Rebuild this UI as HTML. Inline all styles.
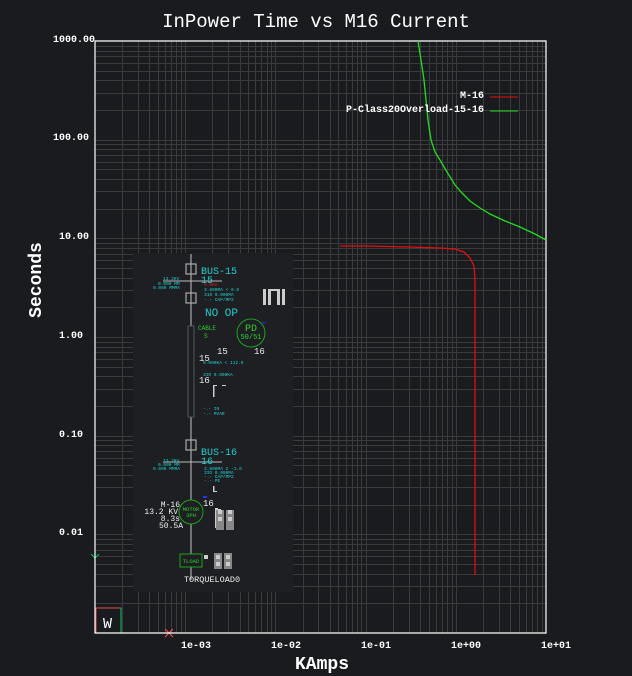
<!DOCTYPE html>
<html><head><meta charset="utf-8"><style>
html,body{margin:0;padding:0;background:#1a1b1e;width:632px;height:676px;overflow:hidden}
svg{display:block}
text{font-family:"Liberation Mono","DejaVu Sans Mono",monospace}
</style></head><body>
<svg id="s" width="632" height="676" xmlns="http://www.w3.org/2000/svg">
<rect width="632" height="676" fill="#1a1b1e"/>
<g id="grid" stroke="#3b3b3b" stroke-width="1"></g>
<text x="316" y="27" fill="#fff" font-size="19" text-anchor="middle">InPower Time vs M16 Current</text>
<g fill="#fff" font-size="10" font-weight="bold" text-anchor="end">
<text x="95" y="42">1000.00</text><text x="89" y="140">100.00</text><text x="89" y="239">10.00</text>
<text x="83" y="338">1.00</text><text x="83" y="437">0.10</text><text x="83" y="535">0.01</text>
</g>
<g fill="#fff" font-size="10" font-weight="bold">
<text x="181" y="648">1e-03</text><text x="271" y="648">1e-02</text><text x="361" y="648">1e-01</text>
<text x="451" y="648">1e+00</text><text x="541" y="648">1e+01</text>
</g>
<text x="322" y="669" fill="#fff" font-size="18" font-weight="bold" text-anchor="middle">KAmps</text>
<text transform="translate(41,280) rotate(-90)" fill="#fff" font-size="18" font-weight="bold" text-anchor="middle">Seconds</text>
<!-- overlay diagram -->
<rect x="133" y="253" width="160" height="339" fill="#1d1f22"/>
<rect x="96" y="608" width="25" height="25" fill="#1a1b1e" stroke="#e05050" stroke-width="1"/>
<line x1="121" y1="608" x2="121" y2="633" stroke="#00d060"/>
<text x="103" y="628" fill="#fff" font-size="15" font-family="Liberation Sans">W</text>
<path d="M165 629 l8 8 M173 629 l-8 8" stroke="#ff5050" stroke-width="1"/>
<path d="M91 554 l4 4 l4 -4 M95 558 v6" stroke="#00c060" fill="none"/>
<!-- axes -->
<path d="M95 41 H546 V633 H95 Z" fill="none" stroke="#fff" stroke-width="1.2"/>
<!-- curves -->
<polyline fill="none" stroke="#22dd22" stroke-width="1.3" points="418,41 421,60 424,80 426,100 428,120 431,140 435,152 440,160 447,172 455,185 462,193 470,201 480,208 490,214 505,221 520,227 535,234 546,240"/>
<polyline fill="none" stroke="#e01010" stroke-width="1.3" points="340,246 364,246 408,247 440,248 455,249 464,252 470,258 474,266 475,280 475,575"/>
<!-- legend -->
<text x="484" y="98" fill="#fff" font-size="10" font-weight="bold" text-anchor="end">M-16</text>
<line x1="490" y1="97" x2="518" y2="97" stroke="#e01010"/>
<text x="484" y="112" fill="#fff" font-size="10" font-weight="bold" text-anchor="end">P-Class20Overload-15-16</text>
<line x1="490" y1="111" x2="518" y2="111" stroke="#22dd22"/>
<!-- one-line diagram -->
<g stroke="#aaa" fill="none" stroke-width="1.2">
<line x1="191" y1="254" x2="191" y2="580"/>
<rect x="186" y="264" width="10" height="10"/>
<rect x="186" y="293" width="10" height="10"/>
<rect x="186" y="440" width="10" height="10"/>
</g>
<rect x="188" y="326" width="6" height="91" fill="#1d1f22" stroke="#4a5a5a"/>
<line x1="163" y1="281" x2="222" y2="281" stroke="#bbb"/>
<line x1="163" y1="462" x2="222" y2="462" stroke="#bbb"/>
<g fill="#20d0d0" font-size="10">
<text x="201" y="274">BUS-15</text><text x="201" y="283">15</text>
<text x="201" y="455">BUS-16</text><text x="201" y="464">16</text>
<text x="205" y="316" font-size="11">NO OP</text>
</g>
<g fill="#20d0d0" font-size="4.5">
<text x="163" y="280">13.2KV</text><text x="158" y="285">0.000 MM</text><text x="153" y="289">0.000 MMMA</text>
<text x="204" y="291">3.800MA  &lt; 0.0</text><text x="204" y="296">310 0.000MA</text><text x="204" y="301">-.- CAP/MP2</text>
<text x="203" y="364">0.000KA &lt; 112.9</text><text x="203" y="376">3IO 0.000KA</text>
<text x="203" y="410">-.- IN</text><text x="203" y="415">-.- MVAR</text>
<text x="163" y="462">13.2KV</text><text x="158" y="466">0.000 MM</text><text x="153" y="470">0.000 MMMA</text>
<text x="204" y="470">3.800MA 2 -1.0</text><text x="204" y="474">3IO 0.000MA</text><text x="204" y="478">-.- CAP/MP2</text><text x="204" y="482">-.- PE</text>
</g>
<text x="204" y="286" fill="#e02020" font-size="4.5">0.0KV</text>
<circle cx="251" cy="333" r="14" fill="none" stroke="#1fa01f"/>
<text x="251" y="331" fill="#30d030" font-size="10" text-anchor="middle">PD</text>
<text x="251" y="339" fill="#30d030" font-size="7" text-anchor="middle">50/51</text>
<text x="198" y="330" fill="#30d030" font-size="6">CABLE</text><text x="204" y="338" fill="#30d030" font-size="6">S</text>
<g fill="#eee" font-size="9">
<text x="217" y="354">15</text><text x="254" y="354">16</text><text x="199" y="361">15</text><text x="199" y="383">16</text>
<text x="203" y="506">16</text>
</g>
<g fill="#eee" font-size="8" text-anchor="end">
<text x="180" y="507">M-16</text><text x="178" y="514">13.2 KV</text><text x="180" y="521">8.3s</text><text x="183" y="528">50.5A</text>
</g>
<circle cx="191" cy="512" r="12" fill="#1d1f22" stroke="#1fa01f"/>
<text x="191" y="511" fill="#30d030" font-size="5.5" text-anchor="middle">MOTOR</text>
<text x="191" y="517" fill="#30d030" font-size="5.5" text-anchor="middle">3PH</text>
<rect x="180" y="554" width="22" height="13" fill="#1d1f22" stroke="#1fa01f"/>
<text x="191" y="563" fill="#30d030" font-size="5.5" text-anchor="middle">TLOAD</text>
<text x="212" y="582" fill="#eee" font-size="8.5" text-anchor="middle">TORQUELOAD0</text>
<g fill="#ccc">
<rect x="263" y="289" width="3" height="16"/><rect x="268" y="289" width="3" height="16"/><rect x="277" y="289" width="3" height="16"/><rect x="282" y="289" width="3" height="16"/><rect x="271" y="289" width="7" height="2"/>
<rect x="215" y="508" width="3" height="20"/><rect x="217" y="509" width="4" height="1.5"/><rect x="217" y="514" width="4" height="1.5"/>
<rect x="216" y="510" width="8" height="20" fill="#888"/><rect x="218" y="510" width="4" height="4"/><rect x="218" y="517" width="4" height="4"/>
<rect x="226" y="510" width="8" height="20" fill="#888"/><rect x="228" y="510" width="4" height="4"/><rect x="228" y="517" width="4" height="4"/>
<rect x="214" y="553" width="8" height="16" fill="#888"/><rect x="216" y="555" width="4" height="4"/><rect x="216" y="562" width="4" height="4"/>
<rect x="224" y="553" width="8" height="16" fill="#888"/><rect x="226" y="555" width="4" height="4"/><rect x="226" y="562" width="4" height="4"/>
<rect x="204" y="555" width="4" height="4"/>
<rect x="213" y="486" width="1.5" height="6"/><rect x="213" y="491" width="4" height="1"/>
<rect x="213" y="385" width="1.5" height="12"/><rect x="213" y="385" width="4" height="1"/><rect x="222" y="385" width="4" height="1"/>
</g>
<rect x="203" y="496" width="4" height="2" fill="#3030ff"/>
<text x="262" y="324" fill="#3030ff" font-size="4">NC</text>
</svg>
<script>
(function(){
var g=document.getElementById('grid'),ns='http://www.w3.org/2000/svg';
var L=95,R=546,T=41,B=633,dx=(R-L)/5,dy=(B-T)/6;
function ln(x1,y1,x2,y2){var l=document.createElementNS(ns,'line');l.setAttribute('x1',x1);l.setAttribute('y1',y1);l.setAttribute('x2',x2);l.setAttribute('y2',y2);g.appendChild(l);}
for(var d=0;d<5;d++)for(var k=1;k<10;k++){var x=Math.round(L+dx*(d+Math.log10(k)))+.5;if(x>L+1)ln(x,T,x,B);}
for(var d=0;d<6;d++)for(var k=1;k<10;k++){var y=Math.round(B-dy*(d+Math.log10(k)))+.5;if(y<B-1)ln(L,y,R,y);}
})();
</script>
</body></html>
